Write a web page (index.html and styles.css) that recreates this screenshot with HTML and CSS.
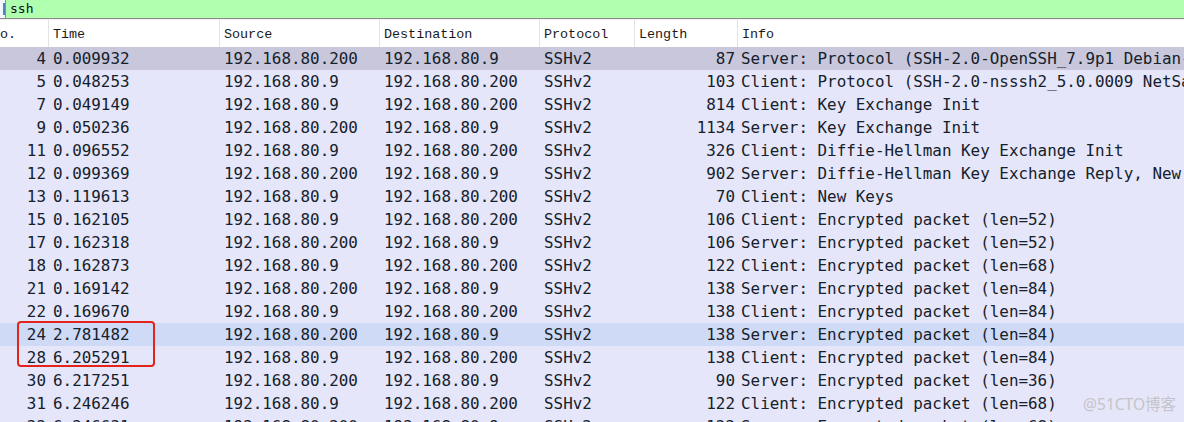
FILE: index.html
```html
<!DOCTYPE html>
<html>
<head>
<meta charset="utf-8">
<link rel="stylesheet" href="styles.css">
</head>
<body>
<div class="app">
  <div class="filterbar">
    <div class="bookmark"><span class="bm-bar"></span></div>
    <div class="filter-text">ssh</div>
  </div>
  <div class="packets">
    <div class="row header">
      <div class="c no">No.</div>
      <div class="c">Time</div>
      <div class="c">Source</div>
      <div class="c">Destination</div>
      <div class="c">Protocol</div>
      <div class="c">Length</div>
      <div class="c">Info</div>
    </div>
    <div class="row sel"><div class="c r">4</div><div class="c">0.009932</div><div class="c">192.168.80.200</div><div class="c">192.168.80.9</div><div class="c">SSHv2</div><div class="c r">87</div><div class="c info">Server: Protocol (SSH-2.0-OpenSSH_7.9p1 Debian-10+deb10u2)</div></div>
    <div class="row"><div class="c r">5</div><div class="c">0.048253</div><div class="c">192.168.80.9</div><div class="c">192.168.80.200</div><div class="c">SSHv2</div><div class="c r">103</div><div class="c info">Client: Protocol (SSH-2.0-nsssh2_5.0.0009 NetSarang Computer, Inc.)</div></div>
    <div class="row"><div class="c r">7</div><div class="c">0.049149</div><div class="c">192.168.80.9</div><div class="c">192.168.80.200</div><div class="c">SSHv2</div><div class="c r">814</div><div class="c info">Client: Key Exchange Init</div></div>
    <div class="row"><div class="c r">9</div><div class="c">0.050236</div><div class="c">192.168.80.200</div><div class="c">192.168.80.9</div><div class="c">SSHv2</div><div class="c r">1134</div><div class="c info">Server: Key Exchange Init</div></div>
    <div class="row"><div class="c r">11</div><div class="c">0.096552</div><div class="c">192.168.80.9</div><div class="c">192.168.80.200</div><div class="c">SSHv2</div><div class="c r">326</div><div class="c info">Client: Diffie-Hellman Key Exchange Init</div></div>
    <div class="row"><div class="c r">12</div><div class="c">0.099369</div><div class="c">192.168.80.200</div><div class="c">192.168.80.9</div><div class="c">SSHv2</div><div class="c r">902</div><div class="c info">Server: Diffie-Hellman Key Exchange Reply, New Keys</div></div>
    <div class="row"><div class="c r">13</div><div class="c">0.119613</div><div class="c">192.168.80.9</div><div class="c">192.168.80.200</div><div class="c">SSHv2</div><div class="c r">70</div><div class="c info">Client: New Keys</div></div>
    <div class="row"><div class="c r">15</div><div class="c">0.162105</div><div class="c">192.168.80.9</div><div class="c">192.168.80.200</div><div class="c">SSHv2</div><div class="c r">106</div><div class="c info">Client: Encrypted packet (len=52)</div></div>
    <div class="row"><div class="c r">17</div><div class="c">0.162318</div><div class="c">192.168.80.200</div><div class="c">192.168.80.9</div><div class="c">SSHv2</div><div class="c r">106</div><div class="c info">Server: Encrypted packet (len=52)</div></div>
    <div class="row"><div class="c r">18</div><div class="c">0.162873</div><div class="c">192.168.80.9</div><div class="c">192.168.80.200</div><div class="c">SSHv2</div><div class="c r">122</div><div class="c info">Client: Encrypted packet (len=68)</div></div>
    <div class="row"><div class="c r">21</div><div class="c">0.169142</div><div class="c">192.168.80.200</div><div class="c">192.168.80.9</div><div class="c">SSHv2</div><div class="c r">138</div><div class="c info">Server: Encrypted packet (len=84)</div></div>
    <div class="row"><div class="c r">22</div><div class="c">0.169670</div><div class="c">192.168.80.9</div><div class="c">192.168.80.200</div><div class="c">SSHv2</div><div class="c r">138</div><div class="c info">Client: Encrypted packet (len=84)</div></div>
    <div class="row hover"><div class="c r">24</div><div class="c">2.781482</div><div class="c">192.168.80.200</div><div class="c">192.168.80.9</div><div class="c">SSHv2</div><div class="c r">138</div><div class="c info">Server: Encrypted packet (len=84)</div></div>
    <div class="row"><div class="c r">28</div><div class="c">6.205291</div><div class="c">192.168.80.9</div><div class="c">192.168.80.200</div><div class="c">SSHv2</div><div class="c r">138</div><div class="c info">Client: Encrypted packet (len=84)</div></div>
    <div class="row"><div class="c r">30</div><div class="c">6.217251</div><div class="c">192.168.80.200</div><div class="c">192.168.80.9</div><div class="c">SSHv2</div><div class="c r">90</div><div class="c info">Server: Encrypted packet (len=36)</div></div>
    <div class="row"><div class="c r">31</div><div class="c">6.246246</div><div class="c">192.168.80.9</div><div class="c">192.168.80.200</div><div class="c">SSHv2</div><div class="c r">122</div><div class="c info">Client: Encrypted packet (len=68)</div></div>
    <div class="row"><div class="c r">32</div><div class="c">6.246631</div><div class="c">192.168.80.200</div><div class="c">192.168.80.9</div><div class="c">SSHv2</div><div class="c r">122</div><div class="c info">Server: Encrypted packet (len=68)</div></div>
  </div>
  <div class="mark"></div>
  <div class="watermark">@51CTO博客</div>
</div>
</body>
</html>
```
FILE: styles.css
```css
html, body {
  margin: 0;
  padding: 0;
  background: #ffffff;
}
.app {
  position: relative;
  width: 1184px;
  height: 422px;
  overflow: hidden;
  background: #e6e6fa;
}
.filterbar {
  display: flex;
  align-items: stretch;
  height: 18px;
  background: #afffaf;
  border-bottom: 1px solid #8c8c8c;
}
.bookmark {
  width: 5px;
  background: #f4f7fb;
  border-right: 1px solid #8a8a8a;
  display: flex;
  align-items: center;
  justify-content: flex-end;
}
.bm-bar {
  display: block;
  width: 2px;
  height: 12px;
  background: #4f86c6;
}
.filter-text {
  padding-left: 4px;
  font-family: "DejaVu Sans Mono", monospace;
  font-size: 13px;
  line-height: 18px;
  color: #111;
}
.packets {
  background: #e6e6fa;
}
.row {
  display: grid;
  grid-template-columns: 48px 171px 160px 160px 95px 103px 447px;
  height: 23px;
  white-space: nowrap;
  font-family: "DejaVu Sans Mono", monospace;
  font-size: 15.9px;
  line-height: 22px;
  color: #15212b;
  background: #e6e6fa;
}
.row.header {
  height: 27px;
  line-height: 29px;
  background: #ffffff;
  border-top: 1px solid #f0f0f0;
  font-family: "Liberation Mono", monospace;
  font-size: 13.4px;
  color: #1a1a1a;
}
.row.header .c {
  border-left: 1px solid #e3e3e3;
  padding-left: 4px;
}
.row.header .c.no {
  border-left: none;
  text-indent: -12px;
}
.row.sel {
  background: #c8c7dc;
}
.row.hover {
  background: #cfdaf6;
}
.c {
  padding-left: 5px;
  padding-top: 1px;
  overflow: hidden;
}
.row.header .c {
  padding-top: 0;
}
.c.r {
  text-align: right;
  padding-left: 0;
  padding-right: 2px;
}
.c.info {
  padding-left: 4px;
  overflow: visible;
}
.mark {
  position: absolute;
  left: 17px;
  top: 321px;
  width: 134px;
  height: 42px;
  border: 2px solid #e3241c;
  border-radius: 4px;
}
.watermark {
  position: absolute;
  right: 8px;
  top: 394px;
  font-family: "Noto Sans", "Noto Sans CJK SC", sans-serif;
  font-size: 15.5px;
  line-height: 20px;
  color: #c4c4c8;
}
```
